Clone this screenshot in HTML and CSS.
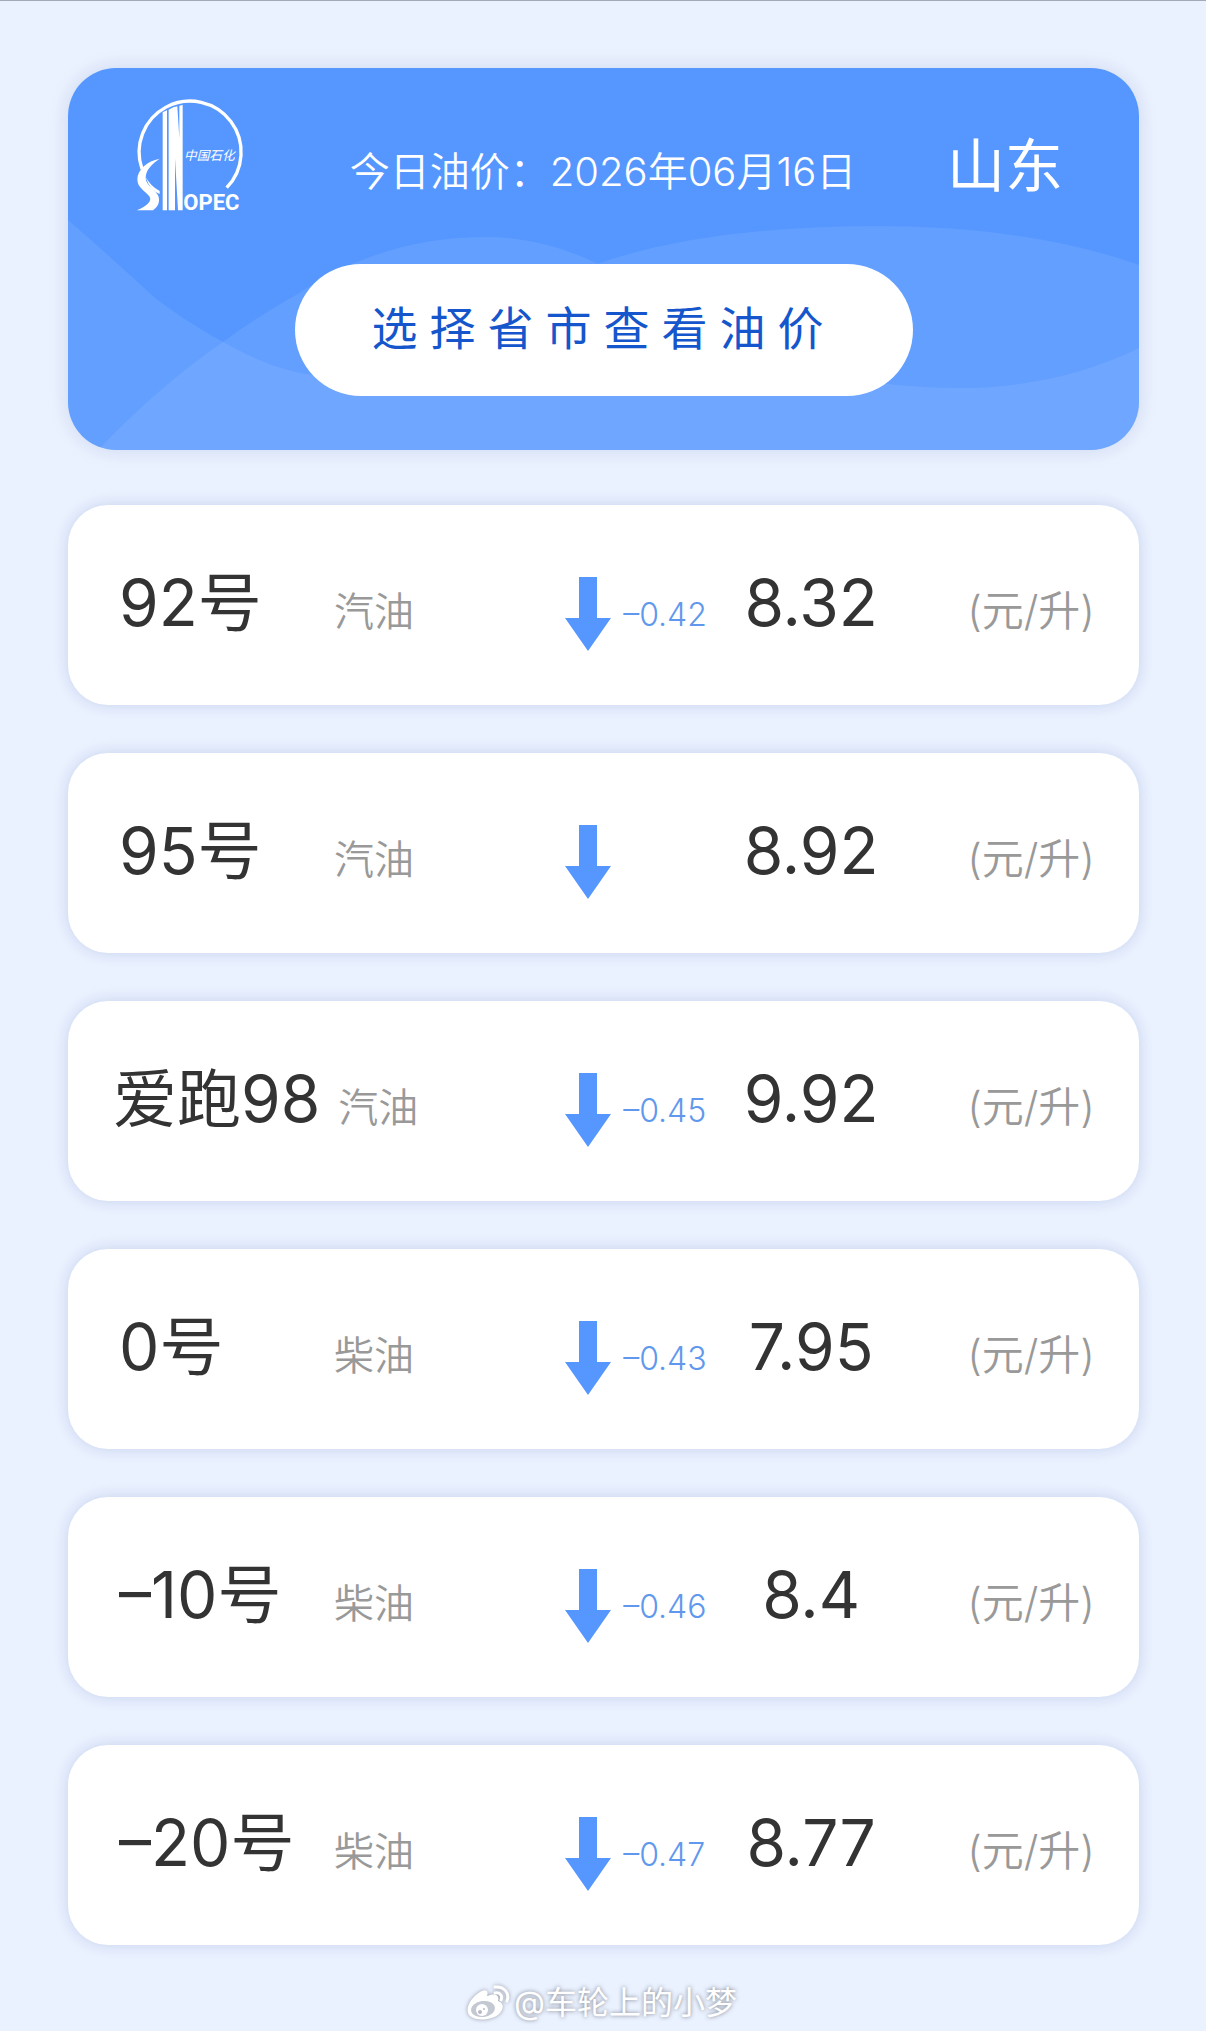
FILE: index.html
```html
<!DOCTYPE html>
<html lang="zh-CN">
<head>
    <meta charset="UTF-8">
    <meta name="viewport" content="width=device-width, initial-scale=1.0">
    <title>今日油价</title>
    <link rel="stylesheet" href="styles.css">
</head>
<body>
    <svg class="defs" aria-hidden="true">
        <symbol id="arrow-down" viewBox="0 0 46 74">
            <path d="M14 0h18v41h14L23 74 0 41h14z" fill="#5697ff"/>
        </symbol>
    </svg>
    <main class="page">
        <header class="banner">
            <svg class="waves" viewBox="0 0 1071 382" preserveAspectRatio="none" aria-hidden="true">
                <path d="M0 152C30 178 58 203 86 229C108 246 130 260 155 274C180 288 203 298 228 304C340 330 420 240 532 195C610 168 710 158 812 158C910 158 1000 172 1071 197V382H0z"/>
                <path d="M30 382C70 340 110 305 155 274C180 255 205 240 228 227C290 186 350 169 420 169C460 169 500 181 528 195C620 240 700 320 890 320C960 320 1020 305 1071 280V382z"/>
            </svg>
            <div class="banner-top">
                <svg class="logo" viewBox="75 55 321 336" role="img" aria-label="中国石化 SINOPEC">
                    <path d="M93 262A153 153 0 1 1 347 318" fill="none" stroke="#fff" stroke-width="10"/>
                    <path d="M146 231C108 238 80 264 79 292C79 319 101 326 116 345C123 358 109 373 77 386H126C145 374 149 352 139 338C128 319 104 310 104 288C105 263 123 247 146 231z" fill="#fff"/>
                    <path d="M104 286Q119 314 146 328V337Q116 326 104 286z" fill="#fff"/>
                    <path d="M155 92L168 86V386H155zM173 84L187 77V386H173zM187 77L199 74L205 170V72L215 70V386H201L192 230V386H187z" fill="#fff"/>
                    <text class="logo-name" x="217" y="386">OPEC</text>
                    <text class="logo-cn" x="219" y="235">中国石化</text>
                </svg>
                <p class="date">今日油价：2026年06月16日</p>
                <h1 class="province">山东</h1>
            </div>
            <button class="picker" type="button">选择省市查看油价</button>
        </header>

        <ul class="prices">
            <li class="price-row">
                <div class="fuel"><span class="grade">92号</span><span class="type">汽油</span></div>
                <svg class="arrow" role="img" aria-label="下跌"><use href="#arrow-down"/></svg>
                <span class="change">–0.42</span>
                <span class="price">8.32</span>
                <span class="unit">(元/升)</span>
            </li>
            <li class="price-row">
                <div class="fuel"><span class="grade">95号</span><span class="type">汽油</span></div>
                <svg class="arrow" role="img" aria-label="下跌"><use href="#arrow-down"/></svg>
                <span class="change"></span>
                <span class="price">8.92</span>
                <span class="unit">(元/升)</span>
            </li>
            <li class="price-row">
                <div class="fuel"><span class="grade grade-brand">爱跑98</span><span class="type">汽油</span></div>
                <svg class="arrow" role="img" aria-label="下跌"><use href="#arrow-down"/></svg>
                <span class="change">–0.45</span>
                <span class="price">9.92</span>
                <span class="unit">(元/升)</span>
            </li>
            <li class="price-row">
                <div class="fuel"><span class="grade">0号</span><span class="type">柴油</span></div>
                <svg class="arrow" role="img" aria-label="下跌"><use href="#arrow-down"/></svg>
                <span class="change">–0.43</span>
                <span class="price">7.95</span>
                <span class="unit">(元/升)</span>
            </li>
            <li class="price-row">
                <div class="fuel"><span class="grade">–10号</span><span class="type">柴油</span></div>
                <svg class="arrow" role="img" aria-label="下跌"><use href="#arrow-down"/></svg>
                <span class="change">–0.46</span>
                <span class="price">8.4</span>
                <span class="unit">(元/升)</span>
            </li>
            <li class="price-row">
                <div class="fuel"><span class="grade">–20号</span><span class="type">柴油</span></div>
                <svg class="arrow" role="img" aria-label="下跌"><use href="#arrow-down"/></svg>
                <span class="change">–0.47</span>
                <span class="price">8.77</span>
                <span class="unit">(元/升)</span>
            </li>
        </ul>

        <footer class="credit">
            <svg class="weibo" viewBox="0 0 44 36" aria-hidden="true">
                <path d="M14 7C20 3 23 6 21 11C28 8 34 9 32 16C38 18 38 23 34 28C28 35 11 37 4 31C-2 25 4 13 14 7z" fill="#fff"/>
                <ellipse cx="17" cy="24" rx="12" ry="8" fill="#c3c8d2" transform="rotate(-8 17 24)"/>
                <circle cx="16" cy="25" r="6" fill="#fff"/>
                <circle cx="14" cy="27" r="2" fill="#b5bac4"/>
                <circle cx="18" cy="24" r="1" fill="#b5bac4"/>
                <path d="M29 2C38 1 44 8 41 16M29 8C34 7 37 11 35 15" fill="none" stroke="#fff" stroke-width="3" stroke-linecap="round"/>
            </svg>
            <span>@车轮上的小梦</span>
        </footer>
    </main>
</body>
</html>
```
FILE: styles.css
```css
* {
    box-sizing: border-box;
}
body {
    margin: 0;
    font-family: Inter, "Noto Sans CJK SC", sans-serif;
    background-color: #ebf2ff;
    color: #333;
    border-top: 1px solid #a3a9b9;
}
h1, p, ul {
    margin: 0;
    padding: 0;
}
.defs {
    display: none;
}
.page {
    padding: 67px 67px 0 68px;
}
.banner {
    position: relative;
    overflow: hidden;
    padding: 32px 68px 54px;
    border-radius: 48px;
    background-color: #5697ff;
    box-shadow: 0 0 20px rgba(80, 110, 170, 0.2);
    color: #fff;
}
.waves {
    position: absolute;
    left: 0;
    top: 0;
    width: 100%;
    height: 100%;
    fill: rgba(255, 255, 255, 0.08);
}
.banner-top {
    position: relative;
    display: flex;
    align-items: flex-start;
    justify-content: space-between;
    height: 164px;
    padding-right: 8px;
}
.logo {
    width: 107px;
    height: 112px;
    overflow: visible;
}
.logo-name {
    font: bold 66px Roboto, sans-serif;
    fill: #fff;
}
.logo-cn {
    font: italic 38px "Noto Sans CJK SC", sans-serif;
    fill: #fff;
}
.date {
    padding: 42px 0 0 16px;
    font-size: 40px;
    font-weight: 350;
    line-height: 60px;
}
.province {
    padding-top: 26px;
    font-size: 58px;
    font-weight: 400;
    line-height: 80px;
}
.picker {
    position: relative;
    display: block;
    width: 618px;
    max-width: 100%;
    height: 132px;
    margin: 0 auto;
    padding: 0 0 10px;
    border: none;
    border-radius: 66px;
    background: #fff;
    color: #1556cc;
    font-family: inherit;
    font-size: 46px;
    letter-spacing: 12px;
    cursor: pointer;
}
.prices {
    display: grid;
    gap: 48px;
    margin-top: 55px;
    list-style: none;
}
.price-row {
    display: grid;
    grid-template-columns: 1fr 46px 112px 176px auto;
    align-items: baseline;
    height: 200px;
    padding: 58px 44px 0 45px;
    border-radius: 40px;
    background: #fff;
    box-shadow: 0 0 16px rgba(80, 110, 180, 0.24);
    line-height: 80px;
}
.fuel {
    display: flex;
    align-items: baseline;
    gap: 18px;
}
.grade {
    min-width: 203px;
    padding-left: 6px;
    font-size: 64px;
}
.grade-brand {
    padding-left: 0;
}
.type {
    color: #999;
    font-size: 40px;
    font-weight: 350;
}
.arrow {
    align-self: start;
    width: 46px;
    height: 74px;
    margin-top: 14px;
}
.change {
    padding-left: 12px;
    color: #5f98ec;
    font-size: 32px;
    font-weight: 350;
}
.price {
    font-size: 64px;
    text-align: center;
}
.unit {
    padding-left: 68px;
    color: #999;
    font-size: 42px;
    font-weight: 350;
}
.credit {
    display: flex;
    align-items: center;
    justify-content: center;
    gap: 4px;
    padding: 34px 4px 0 0;
    color: #fff;
    font-size: 32px;
    line-height: 48px;
    text-shadow: 0 0 4px rgba(90, 95, 105, 0.8);
}
.weibo {
    width: 44px;
    height: 36px;
    filter: drop-shadow(0 0 2px rgba(90, 95, 105, 0.6));
}
```
